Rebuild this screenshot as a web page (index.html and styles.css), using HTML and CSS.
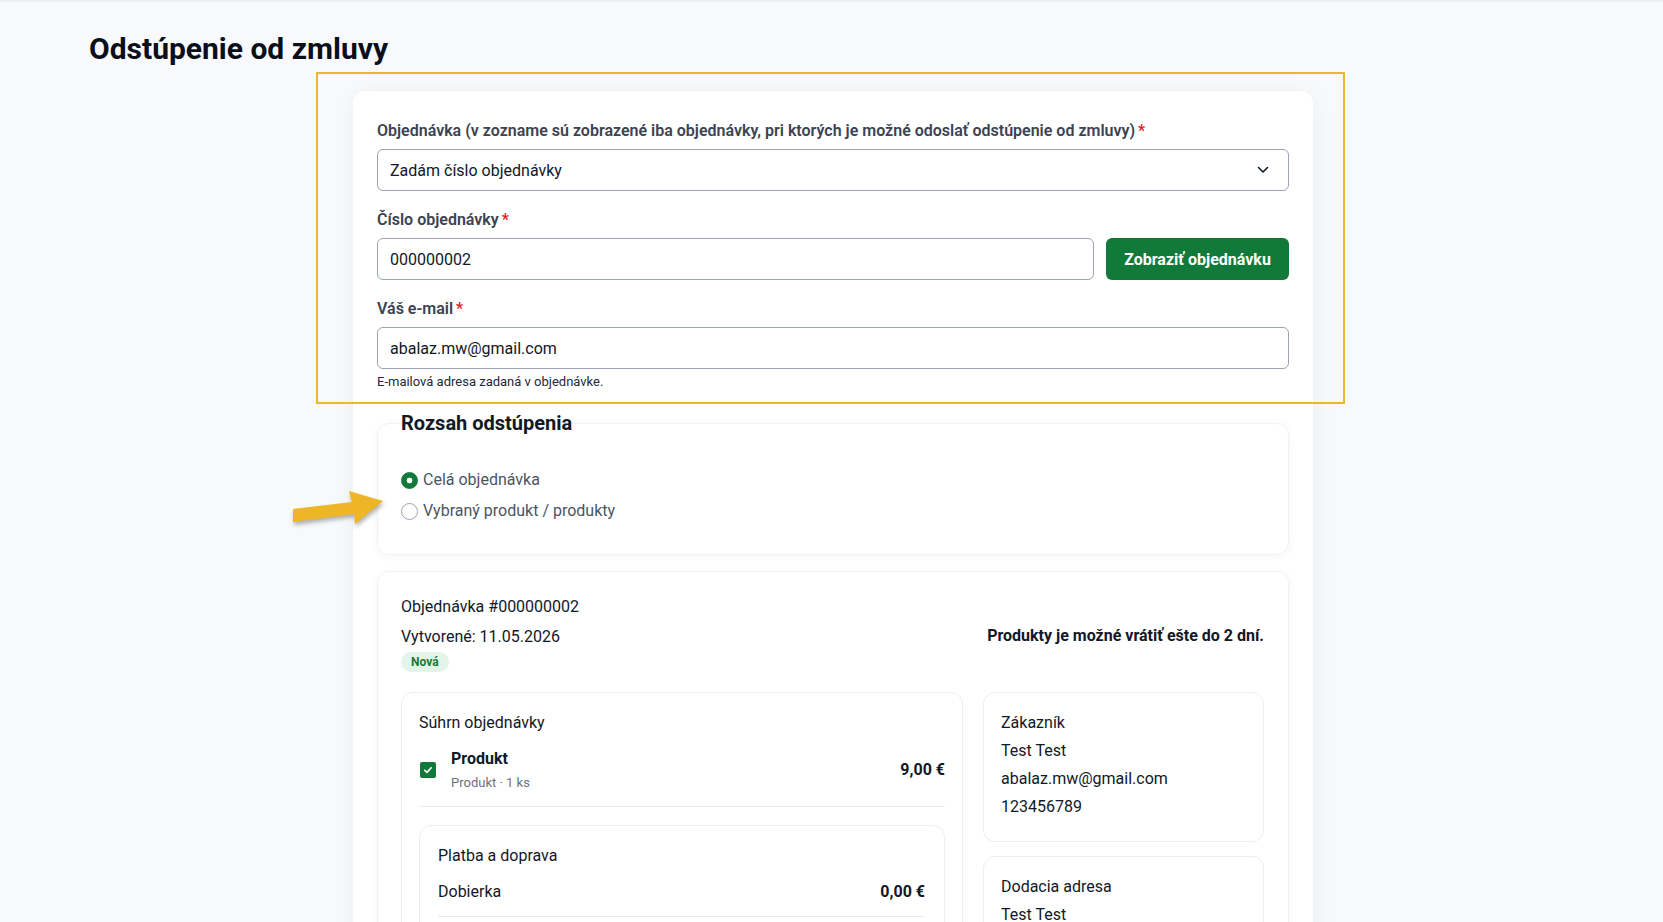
FILE: index.html
```html
<!DOCTYPE html>
<html lang="sk">
<head>
    <meta charset="UTF-8">
    <title>Odstúpenie od zmluvy</title>
    <link rel="stylesheet" href="styles.css">
</head>
<body>
    <!-- tieň hlavičky -->
    <div class="topbar"></div>

    <main class="page">
        <h1 class="page-title">Odstúpenie od zmluvy</h1>

        <div class="card">
            <!-- výber objednávky -->
            <div class="field">
                <label class="label">Objednávka (v zozname sú zobrazené iba objednávky, pri ktorých je možné odoslať odstúpenie od zmluvy)<span class="req">*</span></label>
                <div class="select">
                    <span>Zadám číslo objednávky</span>
                    <svg width="12" height="8" viewBox="0 0 12 8"><path d="M1.5 1.5 6 6l4.5-4.5" fill="none" stroke="#111827" stroke-width="1.6" stroke-linecap="round" stroke-linejoin="round"/></svg>
                </div>
            </div>

            <div class="field">
                <label class="label">Číslo objednávky<span class="req">*</span></label>
                <div class="input-row">
                    <input class="input" type="text" value="000000002">
                    <button class="btn">Zobraziť objednávku</button>
                </div>
            </div>

            <div class="field field-last">
                <label class="label">Váš e-mail<span class="req">*</span></label>
                <input class="input" type="text" value="abalaz.mw@gmail.com">
                <div class="hint">E-mailová adresa zadaná v objednávke.</div>
            </div>

            <!-- rozsah -->
            <fieldset class="scope">
                <legend>Rozsah odstúpenia</legend>
                <div class="radios">
                    <label class="radio"><input type="radio" name="scope" checked> Celá objednávka</label>
                    <label class="radio"><input type="radio" name="scope"> Vybraný produkt / produkty</label>
                </div>
            </fieldset>

            <!-- detail objednávky -->
            <section class="order">
                <div class="order-head">
                    <div>
                        <p class="order-no">Objednávka #000000002</p>
                        <p class="order-date">Vytvorené: 11.05.2026</p>
                        <span class="badge">Nová</span>
                    </div>
                    <p class="order-note">Produkty je možné vrátiť ešte do 2 dní.</p>
                </div>

                <div class="order-grid">
                    <div class="box">
                        <h3 class="box-title">Súhrn objednávky</h3>
                        <div class="product">
                            <input class="check" type="checkbox" checked>
                            <div class="product-info">
                                <div class="product-name">Produkt</div>
                                <div class="product-sub">Produkt · 1 ks</div>
                            </div>
                            <div class="price">9,00 €</div>
                        </div>

                        <div class="box inner">
                            <h3 class="box-title">Platba a doprava</h3>
                            <div class="line"><span>Dobierka</span><b>0,00 €</b></div>
                            <div class="line"><span>Doprava</span><b>0,00 €</b></div>
                        </div>
                    </div>

                    <div class="side">
                        <div class="box">
                            <p>Zákazník</p>
                            <p>Test Test</p>
                            <p>abalaz.mw@gmail.com</p>
                            <p>123456789</p>
                        </div>
                        <div class="box">
                            <p>Dodacia adresa</p>
                            <p>Test Test</p>
                            <p>Hlavná 1</p>
                            <p>811 01 Bratislava</p>
                        </div>
                    </div>
                </div>
            </section>
        </div>
    </main>

    <!-- zvýraznenie na snímke -->
    <div class="highlight"></div>
    <svg class="arrow" width="105" height="45" viewBox="0 0 105 45">
        <polygon points="8,24 67,17 64,6 98,16 70,39 69,29 8,37" fill="#eeb526"/>
    </svg>
</body>
</html>
```

FILE: styles.css
```css
/* celá stránka */
body {
    margin: 0;
    background: #f8f9fb;
    font-family: Roboto, "Liberation Sans", sans-serif;
    color: #111827;
    font-size: 16px;
}

.topbar {
    height: 2px;
    background: #eceef1;
}

.page {
    padding: 29px 86px 0 89px;
}

.page-title {
    margin: 0 0 24px;
    font-size: 30px;
    line-height: 36px;
    font-weight: 700;
    color: #0b0f1a;
}

/* hlavná karta */
.card {
    width: 960px;
    box-sizing: border-box;
    margin: 0 auto;
    background: #fff;
    border-radius: 12px;
    padding: 30px 24px 24px;
    box-shadow: 0 4px 24px rgba(15, 23, 42, 0.05);
}

/* formulár */
.field {
    margin-bottom: 19px;
}

.field-last {
    margin-bottom: 0;
}

.label {
    display: block;
    font-size: 16px;
    line-height: 20px;
    font-weight: 600;
    color: #3b4352;
    margin-bottom: 8px;
}

.req {
    color: #e11d2e;
    margin-left: 3px;
}

.select,
.input {
    height: 42px;
    box-sizing: border-box;
    border: 1px solid #9ba3b0;
    border-radius: 6px;
    background: #fff;
    font-family: inherit;
    font-size: 16px;
    color: #111827;
}

.select {
    display: flex;
    align-items: center;
    justify-content: space-between;
    padding: 0 19px 0 12px;
}

.input {
    display: block;
    width: 100%;
    padding: 0 12px;
}

.input-row {
    display: flex;
    gap: 12px;
}

.input-row .input {
    flex: 1;
}

.btn {
    width: 183px;
    height: 42px;
    border: none;
    border-radius: 6px;
    background: #117a3b;
    color: #fff;
    font-family: inherit;
    font-size: 16px;
    font-weight: 700;
}

.hint {
    margin-top: 5px;
    font-size: 13px;
    line-height: 16px;
    color: #1f2937;
}

/* rozsah odstúpenia */
.scope {
    margin: 21px 0 0;
    padding: 0 23px 31px;
    border: 1px solid #f1f2f4;
    border-radius: 12px;
    box-shadow: 0 2px 10px rgba(15, 23, 42, 0.04);
}

.scope legend {
    padding: 0;
    font-size: 20px;
    line-height: 24px;
    font-weight: 700;
    color: #111827;
}

.radios {
    margin-top: 33px;
    display: flex;
    flex-direction: column;
    gap: 7px;
}

.radio {
    display: flex;
    align-items: center;
    gap: 5px;
    line-height: 24px;
    color: #4b5563;
}

.radio input {
    appearance: none;
    width: 17px;
    height: 17px;
    margin: 0;
    border: 1.5px solid #9ca3af;
    border-radius: 50%;
    background: #fff;
}

.radio input:checked {
    border-color: #117a3b;
    background: radial-gradient(circle, #fff 0 2.6px, #117a3b 3.2px);
}

/* objednávka */
.order {
    margin-top: 16px;
    padding: 23px 24px 24px 23px;
    border: 1px solid #f1f2f4;
    border-radius: 12px;
    box-shadow: 0 2px 10px rgba(15, 23, 42, 0.04);
}

.order-head {
    display: flex;
    justify-content: space-between;
    align-items: center;
    margin-bottom: 20px;
}

.order-no,
.order-date {
    margin: 0 0 6px;
    line-height: 24px;
}

.order-date {
    margin-bottom: 2px;
}

.badge {
    display: inline-block;
    height: 20px;
    line-height: 20px;
    padding: 0 10px;
    border-radius: 10px;
    background: #e3f4e8;
    color: #137b3b;
    font-size: 12px;
    font-weight: 700;
}

.order-note {
    margin: 5px 0 0;
    font-weight: 700;
    line-height: 24px;
}

.order-grid {
    display: grid;
    grid-template-columns: 2fr 1fr;
    gap: 20px;
    align-items: start;
}

.side {
    display: flex;
    flex-direction: column;
    gap: 14px;
}

.box {
    border: 1px solid #eceef1;
    border-radius: 12px;
    padding: 18px 17px 18px;
}

.box p {
    margin: 0 0 4px;
    line-height: 24px;
}

.box-title {
    margin: 0 0 12px;
    font-size: 16px;
    font-weight: 400;
    line-height: 24px;
}

.product {
    display: flex;
    align-items: center;
    gap: 15px;
    padding-bottom: 14px;
    border-bottom: 1px solid #e9ebee;
}

.check {
    appearance: none;
    width: 16px;
    height: 16px;
    margin: 0 0 0 1px;
    border-radius: 2px;
    background: #117a3b url("data:image/svg+xml;utf8,<svg xmlns='http://www.w3.org/2000/svg' viewBox='0 0 16 16'><path d='M4.8 8.3l2.2 2.1 4.2-4.6' fill='none' stroke='white' stroke-width='1.6' stroke-linecap='round' stroke-linejoin='round'/></svg>") center / 16px 16px no-repeat;
}

.product-name {
    font-weight: 700;
    line-height: 24px;
}

.product-sub {
    margin-top: 3px;
    font-size: 13px;
    line-height: 18px;
    color: #6b7280;
}

.price {
    margin-left: auto;
    font-weight: 700;
}

.box.inner {
    margin-top: 18px;
    padding: 18px 19px 0 18px;
}

.inner .box-title {
    margin-bottom: 12px;
}

.line {
    display: flex;
    justify-content: space-between;
    line-height: 24px;
    padding-bottom: 12px;
    margin-bottom: 12px;
    border-bottom: 1px solid #e9ebee;
}

/* žltý rámik a šípka */
.highlight {
    position: absolute;
    left: 316px;
    top: 72px;
    width: 1029px;
    height: 332px;
    box-sizing: border-box;
    border: 2px solid #e9b82c;
}

.arrow {
    position: absolute;
    left: 285px;
    top: 485px;
    filter: drop-shadow(1px 3px 2px rgba(0, 0, 0, 0.3));
}
```
